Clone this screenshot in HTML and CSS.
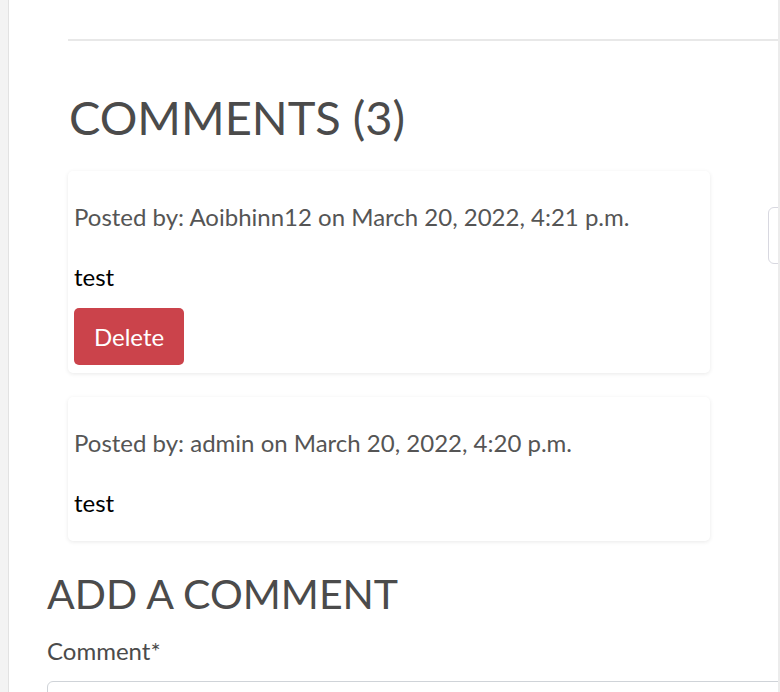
FILE: index.html
```html
<!DOCTYPE html>
<html>
<head>
<meta charset="utf-8">
<link rel="stylesheet" href="styles.css">
</head>
<body>
<div class="page">
  <div class="side"></div>
  <div class="main">
    <div class="top">
      <div class="rule"></div>
      <h2 class="title">COMMENTS (3)</h2>
      <div class="row">
        <div class="cards">
          <div class="card">
            <p class="meta">Posted by: Aoibhinn12 on March 20, 2022, 4:21 p.m.</p>
            <p class="body">test</p>
            <button class="btn-delete">Delete</button>
          </div>
          <div class="card card-plain">
            <p class="meta">Posted by: admin on March 20, 2022, 4:20 p.m.</p>
            <p class="body">test</p>
          </div>
        </div>
        <div class="aside"><div class="aside-box"></div></div>
      </div>
    </div>
    <div class="form">
      <h3 class="form-title">ADD A COMMENT</h3>
      <label class="label">Comment*</label>
      <div class="textarea"></div>
    </div>
  </div>
  <div class="edge"></div>
</div>
</body>
</html>
```
FILE: styles.css
```css
html, body {
  margin: 0;
  padding: 0;
  background: #fff;
  height: 692px;
  overflow: hidden;
}
body {
  font-family: "Lato", "Open Sans", sans-serif;
  color: #000;
}
.page {
  display: flex;
  height: 692px;
}
.side {
  width: 8px;
  flex: none;
  background: #f3f3f3;
  border-right: 1px solid #e2e2e2;
}
.main {
  flex: 1;
  min-width: 0;
  overflow: hidden;
}
.edge {
  width: 2px;
  flex: none;
  background: #ececec;
}
.top {
  padding-left: 59px;
}
.rule {
  margin-top: 39px;
  height: 2px;
  background: #e8e8e8;
}
.title {
  margin: 53px 0 0 1px;
  font-weight: 400;
  font-size: 47px;
  line-height: 1;
  color: #4b4b4b;
}
.row {
  display: flex;
  margin-top: 30px;
}
.cards {
  width: 642px;
  flex: none;
  display: flex;
  flex-direction: column;
  gap: 24px;
}
.card {
  background: #fff;
  border-radius: 5px;
  box-shadow: 0 1px 4px rgba(0,0,0,0.09);
  padding: 32px 6px 8px 6px;
}
.card-plain {
  padding-bottom: 24px;
}
.meta {
  margin: 0;
  font-size: 24px;
  line-height: 28px;
  color: #555;
}
.body {
  margin: 32px 0 0 0;
  font-size: 24px;
  line-height: 28px;
  color: #000;
}
.btn-delete {
  margin-top: 17px;
  display: block;
  width: 110px;
  height: 57px;
  border: none;
  border-radius: 5px;
  background: #cb434b;
  color: #fff;
  font-family: inherit;
  font-size: 24px;
  padding: 0;
}
.aside {
  margin-left: 58px;
  padding-top: 36px;
}
.aside-box {
  width: 40px;
  height: 55px;
  border: 1px solid #d8d8e0;
  border-radius: 6px;
}
.form {
  padding-left: 38px;
}
.form-title {
  margin: 32px 0 0 0;
  font-weight: 400;
  font-size: 41px;
  line-height: 1;
  color: #4b4b4b;
}
.label {
  display: block;
  margin-top: 23px;
  font-size: 24px;
  line-height: 28px;
  color: #4b4b4b;
}
.textarea {
  margin-top: 16px;
  height: 60px;
  border: 1px solid #cfd3d8;
  border-radius: 6px;
  margin-right: -6px;
}
```
